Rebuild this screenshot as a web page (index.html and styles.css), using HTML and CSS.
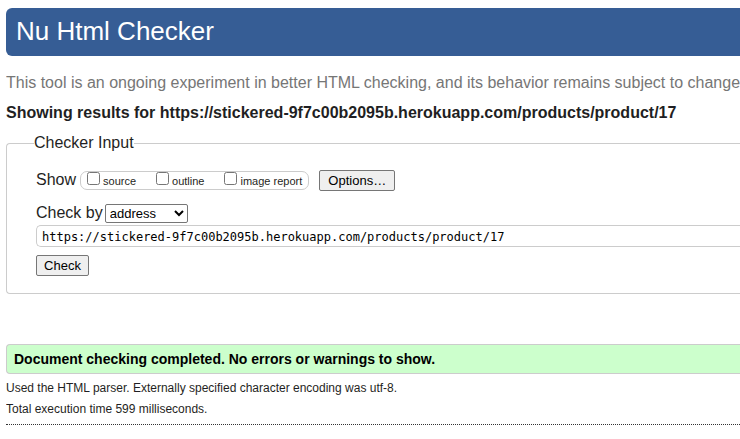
FILE: index.html
```html
<!DOCTYPE html>
<html lang="en">
<head>
<meta charset="utf-8">
<title>Nu Html Checker</title>
<link rel="stylesheet" href="styles.css">
</head>
<body>
<div class="page">
  <header class="banner"><h1>Nu Html Checker</h1></header>
  <p class="about">This tool is an ongoing experiment in better HTML checking, and its behavior remains subject to change</p>
  <h2 class="heading">Showing results for https://stickered-9f7c00b2095b.herokuapp.com/products/product/17</h2>
  <form>
    <fieldset class="panel">
      <legend>Checker Input</legend>
      <div class="row show-row">
        <span>Show</span>
        <span class="checks">
          <label><input type="checkbox">source</label>
          <label><input type="checkbox">outline</label>
          <label><input type="checkbox">image report</label>
        </span>
        <button type="button" class="options">Options…</button>
      </div>
      <div class="row by-row">
        <label for="method">Check by</label>
        <select id="method"><option>address</option><option>file upload</option><option>text input</option></select>
      </div>
      <input class="address" type="url" aria-label="Address" value="https://stickered-9f7c00b2095b.herokuapp.com/products/product/17">
      <button type="submit" class="check">Check</button>
    </fieldset>
  </form>
  <p class="success">Document checking completed. No errors or warnings to show.</p>
  <div class="details">
    <p>Used the HTML parser. Externally specified character encoding was utf-8.</p>
    <p>Total execution time 599 milliseconds.</p>
  </div>
</div>
</body>
</html>
```
FILE: styles.css
```css
* { box-sizing: border-box; }
body {
  margin: 0;
  padding: 8px 0 0 6px;
  background: #fff;
  color: #1f1f23;
  font: 16px/20px "Liberation Sans", Arial, sans-serif;
}
.page { overflow: hidden; }
p, h1, h2 { margin: 0; }
/* Panels sit flush with the right edge, so they are open on that side. */
.banner {
  padding: 8px 10px 10px;
  border-radius: 6px 0 0 6px;
  background: #365d95;
  color: #fff;
}
h1 { font-size: 26px; font-weight: 400; line-height: 30px; }
.about { margin-top: 17px; color: #767676; white-space: nowrap; }
.heading { margin-top: 10px; font-size: 16px; line-height: 20px; white-space: nowrap; }
.panel {
  min-width: 0;
  margin: 10px 0 0;
  padding: 16px 0 17px 29px;
  border: 1px solid #ccc;
  border-right: 0;
  border-radius: 4px 0 0 4px;
}
legend { margin-left: -2px; padding: 0; line-height: 20px; }
.row { display: flex; align-items: center; }
.show-row { height: 22px; }
.checks {
  display: flex;
  height: 19px;
  margin: 0 10px 0 4px;
  padding: 0 6px;
  gap: 20px;
  border: 1px solid #ccc;
  border-radius: 7px;
  font-size: 11px;
  line-height: 19px;
}
.checks label { display: flex; gap: 3px; }
.checks input { width: 13px; height: 13px; margin: 0; }
button, select {
  border: 1px solid #767676;
  border-radius: 2px;
  color: #000;
  font: 13px/16px "Liberation Sans", Arial, sans-serif;
}
button { height: 21px; padding: 1px 7px 0; background: #efefef; }
.options { width: 76px; }
.by-row { margin-top: 12px; gap: 2px; }
select { width: 83px; height: 19px; padding: 0; background: #fff; }
.address {
  display: block;
  width: 100%;
  height: 22px;
  margin: 2px 0 8px;
  padding: 1px 5px 0;
  border: 1px solid #ccc;
  border-right: 0;
  border-radius: 5px 0 0 5px;
  background: #fff;
  color: #000;
  font: 12px/16px Consolas, "DejaVu Sans Mono", monospace;
}
.check { width: 53px; }
.success {
  margin-top: 50px;
  padding: 4px 7px;
  border: 1px solid #ccc;
  border-right: 0;
  border-radius: 4px 0 0 4px;
  background: #cfc;
  color: #000;
  font-size: 14px;
  font-weight: 700;
}
.details {
  display: grid;
  gap: 5px;
  padding: 6px 0 7px;
  border-bottom: 1px dotted #333;
  font-size: 12px;
  line-height: 16px;
}
```
